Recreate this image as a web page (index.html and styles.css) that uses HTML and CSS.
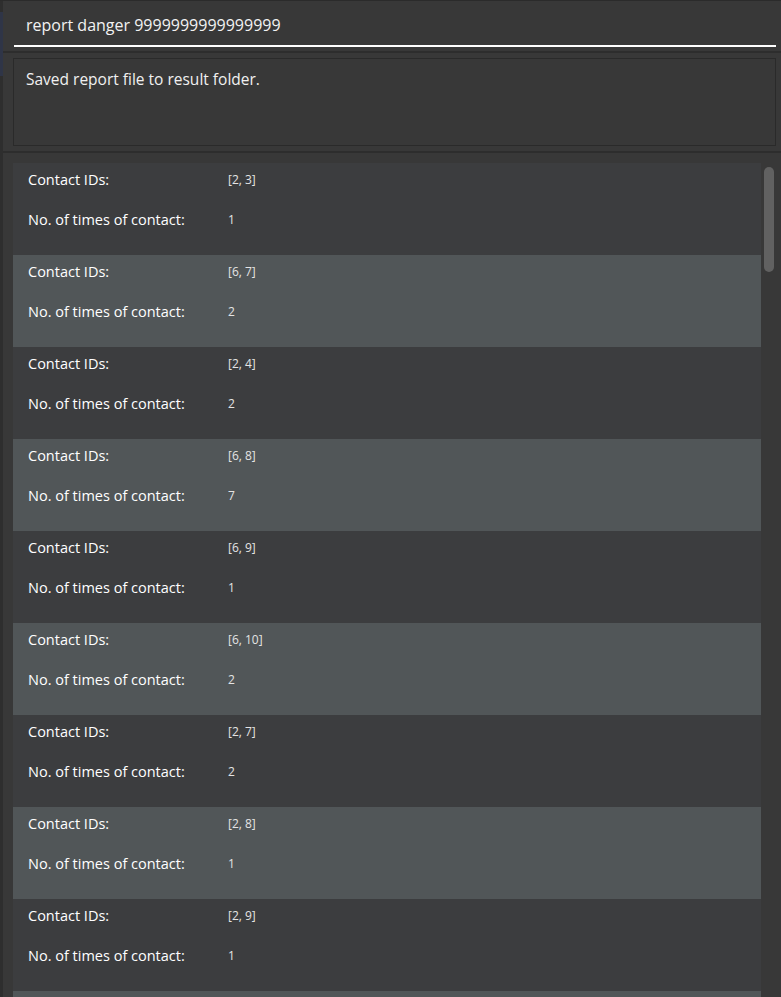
FILE: index.html
```html
<!DOCTYPE html>
<html>
<head>
<meta charset="utf-8">
<link rel="stylesheet" href="styles.css">
</head>
<body>
<div class="app">
  <div class="edge"><div class="edge-accent"></div></div>
  <div class="main">
    <div class="command">
      <div class="command-text">report danger 9999999999999999</div>
    </div>
    <div class="sep"></div>
    <div class="result-wrap">
      <div class="result">Saved report file to result folder.</div>
    </div>
    <div class="sep"></div>
    <div class="list-area">
      <div class="list">
        <div class="card"><div class="row"><span class="label">Contact IDs:</span><span class="value">[2, 3]</span></div><div class="row"><span class="label">No. of times of contact:</span><span class="value">1</span></div></div>
        <div class="card alt"><div class="row"><span class="label">Contact IDs:</span><span class="value">[6, 7]</span></div><div class="row"><span class="label">No. of times of contact:</span><span class="value">2</span></div></div>
        <div class="card"><div class="row"><span class="label">Contact IDs:</span><span class="value">[2, 4]</span></div><div class="row"><span class="label">No. of times of contact:</span><span class="value">2</span></div></div>
        <div class="card alt"><div class="row"><span class="label">Contact IDs:</span><span class="value">[6, 8]</span></div><div class="row"><span class="label">No. of times of contact:</span><span class="value">7</span></div></div>
        <div class="card"><div class="row"><span class="label">Contact IDs:</span><span class="value">[6, 9]</span></div><div class="row"><span class="label">No. of times of contact:</span><span class="value">1</span></div></div>
        <div class="card alt"><div class="row"><span class="label">Contact IDs:</span><span class="value">[6, 10]</span></div><div class="row"><span class="label">No. of times of contact:</span><span class="value">2</span></div></div>
        <div class="card"><div class="row"><span class="label">Contact IDs:</span><span class="value">[2, 7]</span></div><div class="row"><span class="label">No. of times of contact:</span><span class="value">2</span></div></div>
        <div class="card alt"><div class="row"><span class="label">Contact IDs:</span><span class="value">[2, 8]</span></div><div class="row"><span class="label">No. of times of contact:</span><span class="value">1</span></div></div>
        <div class="card"><div class="row"><span class="label">Contact IDs:</span><span class="value">[2, 9]</span></div><div class="row"><span class="label">No. of times of contact:</span><span class="value">1</span></div></div>
        <div class="card alt"></div>
      </div>
      <div class="scroll-track"><div class="scroll-thumb"></div></div>
    </div>
  </div>
</div>
</body>
</html>
```

FILE: styles.css
```css
html, body {
  margin: 0;
  padding: 0;
  background: #383838;
  overflow: hidden;
}
body {
  width: 781px;
  height: 997px;
  font-family: "Open Sans", "Noto Sans", sans-serif;
  color: #ffffff;
}
.app {
  display: flex;
  height: 997px;
  border-top: 1px solid #2b2b2b;
  box-sizing: border-box;
}
.edge {
  width: 3px;
  background: #2e2e2e;
  flex-shrink: 0;
}
.edge-accent {
  margin-top: 11px;
  height: 64px;
  background: #2f3547;
}
.main {
  flex: 1;
  display: flex;
  flex-direction: column;
  min-width: 0;
}
.command {
  height: 44px;
  margin: 0 5px 0 11px;
  border-bottom: 2px solid #ffffff;
  box-sizing: content-box;
  display: flex;
  align-items: center;
  padding-left: 12px;
  flex-shrink: 0;
}
.command-text {
  font-size: 16px;
  color: #f2f2f2;
  margin-top: 3px;
}
.sep {
  height: 2px;
  background: #2d2d2d;
  margin-top: 4px;
  flex-shrink: 0;
}
.result-wrap {
  padding: 5px 5px 1px 10px;
  flex-shrink: 0;
}
.result {
  height: 88px;
  border: 1px solid #2a2a2a;
  padding: 9px 12px;
  box-sizing: border-box;
  font-size: 15.5px;
  color: #f0f0f0;
}
.list-area {
  flex: 1;
  display: flex;
  padding: 10px 0 0 10px;
  min-height: 0;
  overflow: hidden;
}
.list {
  width: 748px;
  flex-shrink: 0;
}
.card {
  height: 92px;
  background: #3c3d3f;
  padding: 6px 0 0 15px;
  box-sizing: border-box;
}
.card.alt {
  background: #515658;
}
.row {
  display: flex;
  align-items: center;
  height: 20px;
  margin-bottom: 20px;
}
.label {
  width: 200px;
  font-size: 14.5px;
  color: #ffffff;
}
.value {
  font-size: 12px;
  color: #e4e4e4;
}
.scroll-track {
  flex: 1;
  padding: 4px 0 0 3px;
}
.scroll-thumb {
  width: 10px;
  height: 105px;
  border-radius: 5px;
  background: #616161;
}
```
